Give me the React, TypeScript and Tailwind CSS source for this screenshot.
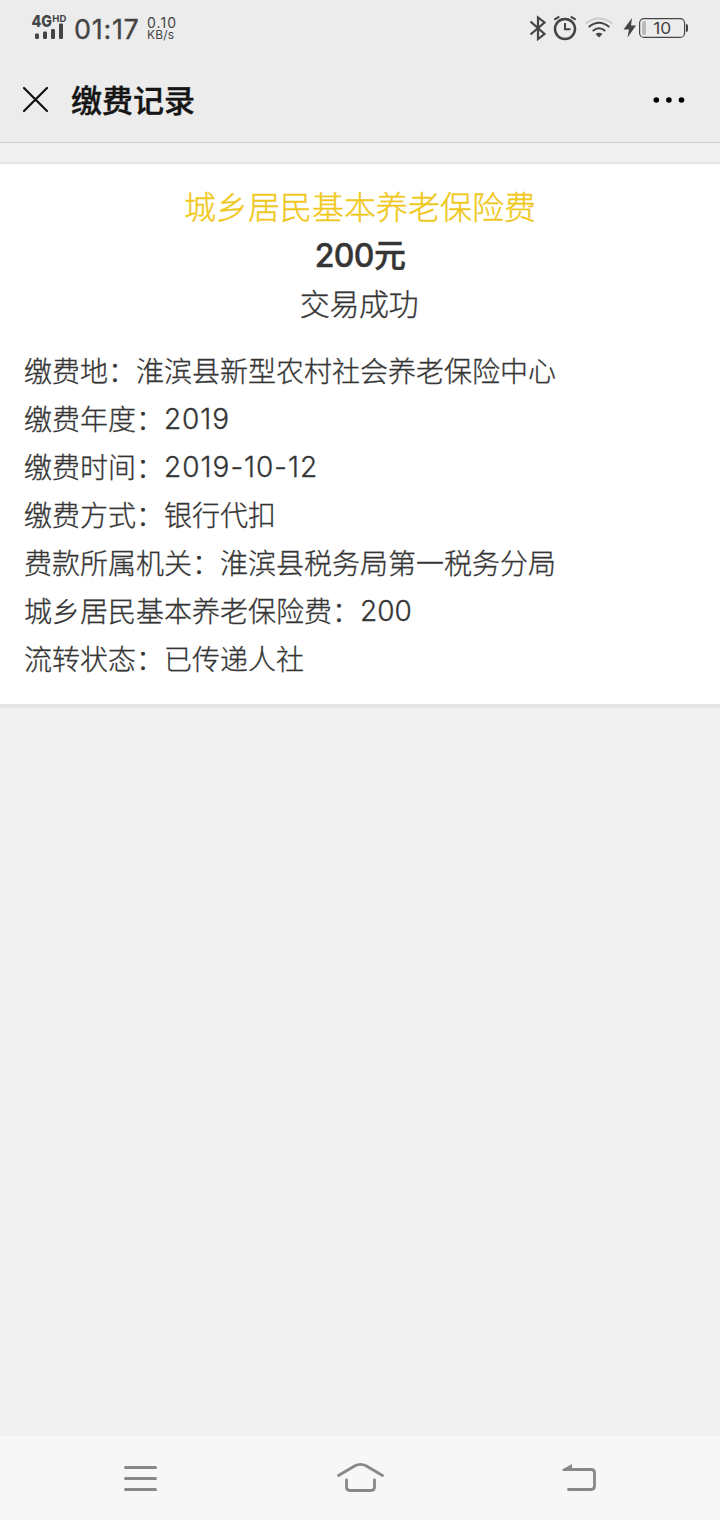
const details = [
  { label: '缴费地', value: '淮滨县新型农村社会养老保险中心' },
  { label: '缴费年度', value: '2019', valueClass: 'relative -top-px tracking-[0.9px]' },
  { label: '缴费时间', value: '2019-10-12', valueClass: 'relative -top-px tracking-[1px]' },
  { label: '缴费方式', value: '银行代扣' },
  { label: '费款所属机关', value: '淮滨县税务局第一税务分局' },
  { label: '城乡居民基本养老保险费', value: '200', valueClass: 'relative -top-px' },
  { label: '流转状态', value: '已传递人社' },
];

function StatusBar() {
  return (
    <div className="flex h-14 shrink-0 items-center justify-between pl-[31px] pr-[31px] text-[#444]">
      <div className="flex items-center">
        <svg width="36" height="40" viewBox="0 -6 36 40" fill="currentColor">
          <text x="0.5" y="13" fontSize="16.5" fontWeight="800" textLength="20.5" lengthAdjust="spacingAndGlyphs">4G</text>
          <text x="21.3" y="8" fontSize="9.5" fontWeight="700" textLength="14" lengthAdjust="spacingAndGlyphs">HD</text>
          <rect x="4" y="19.5" width="4" height="5.5" rx="1.3" />
          <rect x="12" y="17.5" width="4" height="7.5" rx="1.3" />
          <rect x="20" y="15" width="4" height="10" rx="1.3" />
          <rect x="28" y="9.5" width="4" height="15.5" rx="1" />
        </svg>
        <span className="ml-[7px] mt-[3px] w-[66px] whitespace-nowrap text-[27px] leading-8 tracking-[0.7px] [-webkit-text-stroke:0.3px_#444]">01:17</span>
        <div className="ml-[7px] mt-px flex flex-col">
          <span className="text-[14px] leading-[13px] tracking-[1.1px]">0.10</span>
          <span className="text-[12px] leading-[12px] tracking-[0.2px]">KB/s</span>
        </div>
      </div>
      <svg width="160" height="32" viewBox="0 0 160 32" fill="none" stroke="currentColor">
        <path d="M1.5 9.5L15.5 22L9 27V5.5L15.5 10.5L1.5 22.5" strokeWidth="2.2" />
        <circle cx="36" cy="17" r="10" strokeWidth="2.5" />
        <path d="M36 11V17.3H41.5" strokeWidth="2" />
        <path d="M25.3 7.6L30.3 4.7M46.7 7.6L41.7 4.7" strokeWidth="2" />
        <path d="M56.5 11.5Q70 1.5 83.5 11.5" stroke="#ccc" strokeWidth="1.8" />
        <path d="M59.7 15Q70 6.5 80.3 15" strokeWidth="2" />
        <path d="M63.7 19Q70 13.6 76.3 19" strokeWidth="2" />
        <path d="M66.5 22Q70 19.5 73.5 22L70 25.5Z" fill="currentColor" stroke="none" />
        <path d="M103 6L94.5 17.5H100L98.5 25.5L107 13.5H102Z" fill="currentColor" stroke="none" />
        <rect x="110.6" y="6.6" width="45" height="18.8" rx="4.5" strokeWidth="1.2" />
        <rect x="113" y="9" width="4" height="14" rx="1.5" fill="#bcbcbc" stroke="none" />
        <path d="M157 12Q159 12 159 14V18Q159 20 157 20Z" fill="currentColor" stroke="none" />
        <text x="124.2" y="21.8" fontSize="16.5" textLength="18" lengthAdjust="spacingAndGlyphs" fill="currentColor" stroke="none">10</text>
      </svg>
    </div>
  );
}

function Header() {
  return (
    <header className="flex h-[86px] shrink-0 items-center justify-between pl-[22px] pr-[35px]">
      <div className="flex items-center">
        <svg width="27" height="27" viewBox="0 0 27 27" stroke="#111" strokeWidth="2.2" strokeLinecap="round">
          <path d="M2 2L25 25M25 2L2 25" />
        </svg>
        <h1 className="ml-[22px] mt-[3px] text-[31px] font-medium leading-10 text-[#151515] [-webkit-text-stroke:0.4px_#151515]">缴费记录</h1>
      </div>
      <svg width="32" height="8" viewBox="0 0 32 8" fill="#000">
        <circle cx="3.3" cy="5" r="2.8" />
        <circle cx="15.9" cy="5" r="2.8" />
        <circle cx="28.5" cy="5" r="2.8" />
      </svg>
    </header>
  );
}

function NavBar() {
  return (
    <nav className="flex h-[84px] shrink-0 items-center justify-between bg-[#f7f7f7] pl-[124px] pr-[123px]">
      <svg width="34" height="40" viewBox="0 0 34 40" fill="none" stroke="#888" strokeWidth="3" strokeLinecap="round">
        <path d="M1.5 9.5H31.5M1.5 20.5H31.5M1.5 31.5H31.5" />
      </svg>
      <svg width="50" height="40" viewBox="0 0 50 40" fill="none" stroke="#888" strokeWidth="2.8" strokeLinecap="round">
        <path d="M3.5 17.5L20 7.8Q25.5 5 31 7.8L47.5 17.5" />
        <path d="M11.5 22V29Q11.5 32.5 15 32.5H36Q39.5 32.5 39.5 29V22" />
      </svg>
      <svg width="35" height="40" viewBox="0 0 35 40" fill="none" stroke="#888" strokeWidth="2.8" strokeLinecap="round">
        <path d="M3 11.5H29Q32.5 11.5 32.5 15V28Q32.5 31.5 29 31.5H6.5" />
        <path d="M0.5 11.5L10 6V12.9H1.5Q-.5 12.5 .5 11.5Z" fill="#888" stroke="none" />
      </svg>
    </nav>
  );
}

export default function App() {
  return (
    <div className="flex h-[1520px] w-[720px] flex-col bg-[#f0f0f0] font-[Inter,'Noto_Sans_CJK_SC',sans-serif]">
      <div className="flex h-[143px] shrink-0 flex-col border-b border-[#cfcfcf] bg-[#ececec]">
        <StatusBar />
        <Header />
      </div>
      <main className="flex-1 pt-[19px]">
        <section className="h-[546px] border-b-4 border-t-2 border-[#e5e5e5] bg-white pt-5 text-[#353535]">
          <div className="flex flex-col items-center">
            <h2 className="h-12 text-[32px] font-light leading-[48px] text-[#f0c81e] [-webkit-text-stroke:0.4px_#f0c81e]">城乡居民基本养老保险费</h2>
            <p className="h-12 text-[32px] font-medium leading-[48px] tracking-[-0.6px] [-webkit-text-stroke:0.4px_#353535]">200元</p>
            <p className="h-12 pr-0.5 text-[30px] font-light leading-[48px] tracking-[-0.4px] [-webkit-text-stroke:0.3px_#353535]">交易成功</p>
          </div>
          <ul className="mt-5 px-6">
            {details.map((item) => (
              <li key={item.label} className="h-12 whitespace-nowrap text-[28px] font-light leading-[48px] [-webkit-text-stroke:0.3px_#353535]">
                {item.label}：<span className={item.valueClass}>{item.value}</span>
              </li>
            ))}
          </ul>
        </section>
      </main>
      <NavBar />
    </div>
  );
}
